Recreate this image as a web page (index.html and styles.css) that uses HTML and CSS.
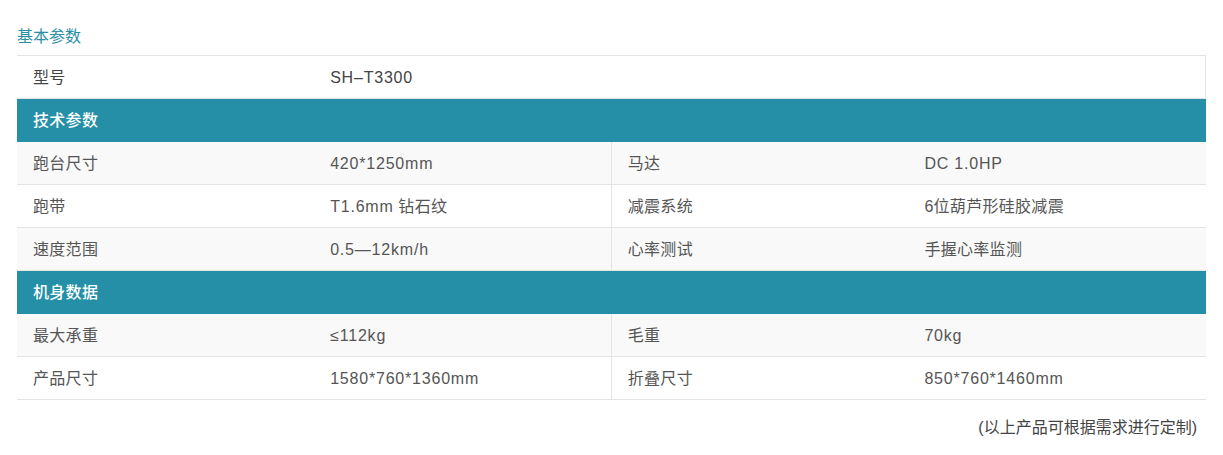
FILE: index.html
```html
<!DOCTYPE html>
<html lang="zh">
<head>
<meta charset="utf-8">
<link rel="stylesheet" href="styles.css">
</head>
<body>
<div class="page">
  <div class="title">基本参数</div>
  <table class="spec">
    <colgroup><col><col><col><col></colgroup>
    <tr class="model"><td>型号</td><td colspan="3"><span class="en">SH–T3300</span></td></tr>
    <tr class="head"><td colspan="4">技术参数</td></tr>
    <tr class="odd"><td>跑台尺寸</td><td><span class="en">420*1250mm</span></td><td class="sep">马达</td><td><span class="en">DC 1.0HP</span></td></tr>
    <tr><td>跑带</td><td><span class="en">T1.6mm</span> 钻石纹</td><td class="sep">减震系统</td><td>6位葫芦形硅胶减震</td></tr>
    <tr class="odd"><td>速度范围</td><td><span class="en">0.5—12km/h</span></td><td class="sep">心率测试</td><td>手握心率监测</td></tr>
    <tr class="head"><td colspan="4">机身数据</td></tr>
    <tr class="odd"><td>最大承重</td><td><span class="en">≤112kg</span></td><td class="sep">毛重</td><td><span class="en">70kg</span></td></tr>
    <tr><td>产品尺寸</td><td><span class="en">1580*760*1360mm</span></td><td class="sep">折叠尺寸</td><td><span class="en">850*760*1460mm</span></td></tr>
  </table>
  <div class="note">(以上产品可根据需求进行定制)</div>
</div>
</body>
</html>
```
FILE: styles.css
```css
html, body {
  margin: 0;
  padding: 0;
  background: #ffffff;
}
body {
  font-family: "Liberation Sans", "Noto Sans CJK SC", sans-serif;
  color: #555555;
}
.page {
  width: 1189px;
  padding: 27px 0 0 17px;
}
.title {
  font-size: 16px;
  line-height: 20px;
  color: #2b8fa6;
  margin-bottom: 8px;
}
.spec {
  width: 1189px;
  border-collapse: collapse;
  table-layout: fixed;
  font-size: 16px;
}
.spec col {
  width: 25%;
}
.spec td {
  height: 40px;
  padding: 2px 16px 0;
  border-bottom: 1px solid #e3e3e3;
  line-height: 20px;
  vertical-align: middle;
  color: #555555;
  letter-spacing: 0.3px;
}
.spec .en {
  letter-spacing: 0.8px;
}
.spec tr.model td {
  border-top: 1px solid #e3e3e3;
  color: #444444;
}
.spec tr.model td:last-child {
  border-right: 1px solid #e3e3e3;
}
.spec tr.head td {
  background: #248fa6;
  color: #ffffff;
  font-weight: 500;
  border-bottom: 1px solid #248fa6;
}
.spec tr.odd td {
  background: #f9f9f9;
}
.spec td.sep {
  border-left: 1px solid #e3e3e3;
}
.note {
  margin-top: 18px;
  text-align: right;
  padding-right: 9px;
  font-size: 16px;
  line-height: 20px;
  color: #444444;
}
```
